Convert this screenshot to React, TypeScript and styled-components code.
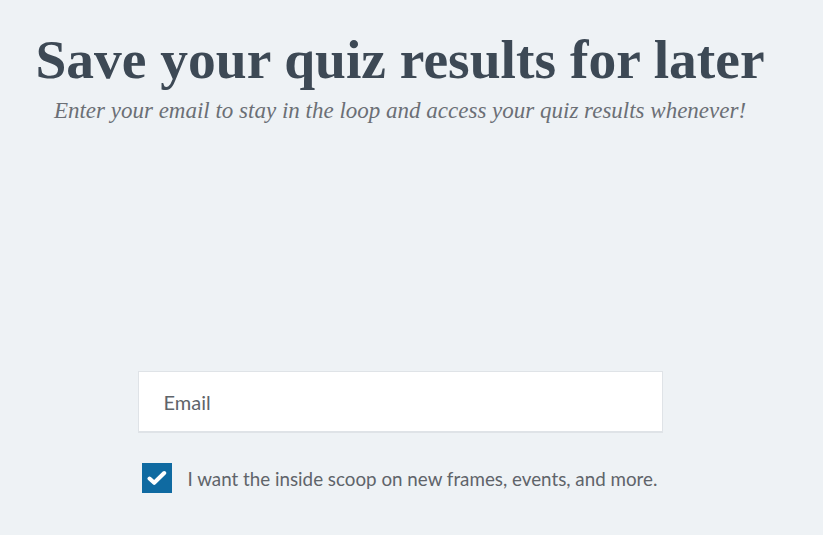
import React from "react";
import styled, { createGlobalStyle } from "styled-components";

const Global = createGlobalStyle`
  html, body { margin: 0; padding: 0; background: #eef2f5; }
  body { width: 823px; height: 535px; overflow: hidden; }
`;

const Page = styled.main`
  width: 800px;
  display: flex;
  flex-direction: column;
  align-items: center;
`;

const Title = styled.h1`
  margin: 28px 0 0;
  font-family: "Liberation Serif", "DejaVu Serif", serif;
  font-weight: 700;
  font-size: 55.5px;
  line-height: 64px;
  color: #3d4955;
`;

const Subtitle = styled.p`
  margin: 4px 0 0;
  font-family: "Liberation Serif", "DejaVu Serif", serif;
  font-style: italic;
  font-size: 23px;
  line-height: 30px;
  color: #6b6f75;
`;

const Form = styled.form`
  margin-top: 245px;
  width: 525px;
  display: flex;
  flex-direction: column;
  gap: 30px;
`;

const EmailInput = styled.input`
  box-sizing: border-box;
  width: 100%;
  height: 62px;
  padding: 0 25px;
  border: 1px solid #dfe3e7;
  border-bottom-width: 2px;
  background: #ffffff;
  font-family: "Lato", "Open Sans", sans-serif;
  font-size: 20px;
  color: #55595f;
  outline: none;
  &::placeholder { color: #5f646a; }
`;

const CheckRow = styled.label`
  display: flex;
  align-items: center;
  gap: 16px;
  padding-left: 4px;
  font-family: "Lato", "Open Sans", sans-serif;
  font-size: 18.8px;
  color: #5f646a;
`;

const Box = styled.span`
  width: 30px;
  height: 30px;
  flex: none;
  background: #0f6aa1;
  display: flex;
  align-items: center;
  justify-content: center;
`;

export default function App() {
  return (
    <>
      <Global />
      <Page>
        <Title>Save your quiz results for later</Title>
        <Subtitle>Enter your email to stay in the loop and access your quiz results whenever!</Subtitle>
        <Form onSubmit={(e) => e.preventDefault()}>
          <EmailInput type="email" placeholder="Email" />
          <CheckRow>
            <Box>
              <svg width="20" height="16" viewBox="0 0 20 16">
                <path d="M2.5 8.5 L7.2 12.8 L17.2 3" fill="none" stroke="#fff" strokeWidth="4" strokeLinecap="round" strokeLinejoin="round" />
              </svg>
            </Box>
            I want the inside scoop on new frames, events, and more.
          </CheckRow>
        </Form>
      </Page>
    </>
  );
}
